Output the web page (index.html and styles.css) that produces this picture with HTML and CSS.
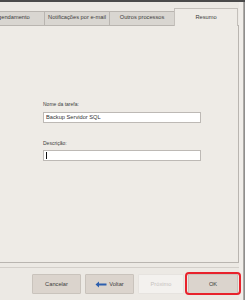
FILE: index.html
```html
<!DOCTYPE html>
<html lang="pt">
<head>
    <meta charset="UTF-8">
    <title>Assistente de tarefa</title>
    <link rel="stylesheet" href="styles.css">
</head>
<body>
    <div class="titlebar"></div>
    <div class="window">
        <div class="main">
            <nav class="tabs">
                <div class="tab">Agendamento</div>
                <div class="tab">Notificações por e-mail</div>
                <div class="tab">Outros processos</div>
                <div class="tab active">Resumo</div>
            </nav>

            <section class="panel">
                <div class="form">
                    <label class="field-label">Nome da tarefa:</label>
                    <div class="input">Backup Servidor SQL</div>

                    <label class="field-label second">Descrição:</label>
                    <div class="input"><span class="caret"></span></div>
                </div>
            </section>

            <footer class="footer">
                <button class="btn cancel">Cancelar</button>
                <button class="btn back">
                    <svg class="arrow" width="12" height="7" viewBox="0 0 12 7">
                        <path d="M0.5 3.5 L4 0.5 L4 2.6 L11.5 2.6 L11.5 4.4 L4 4.4 L4 6.5 Z" fill="#2d5fae"/>
                    </svg>
                    Voltar
                </button>
                <button class="btn next" disabled>Próximo</button>
                <button class="btn ok">OK</button>
            </footer>
        </div>
        <div class="edge"></div>
    </div>
</body>
</html>
```

FILE: styles.css
```css
:root {
    --window-bg: #ece9e4;
    --panel-bg: #eeebe6;
    --tab-bg: #d9d6d1;
    --border: #b9b5b0;
    --text: #3c3c3c;
    --button-bg: #dbd4cd;
    --highlight: #e8222c;
}

* {
    box-sizing: border-box;
    margin: 0;
    padding: 0;
}

body {
    width: 245px;
    height: 300px;
    overflow: hidden;
    background: var(--window-bg);
    color: var(--text);
    font-family: "Liberation Sans", Arial, sans-serif;
    font-size: 5.7px;
}

.titlebar {
    height: 2px;
    background: #4a4a4a;
}

.window {
    display: flex;
    height: 298px;
}

.main {
    flex: 1;
    display: flex;
    flex-direction: column;
    min-width: 0;
}

.edge {
    width: 6px;
    background: linear-gradient(to right, #f0ede9 0 4px, #aeaba7 4px 5px, #8f8e8d 5px);
}

/* tabs */
.tabs {
    display: flex;
    align-items: flex-end;
    height: 17px;
    margin-top: 6px;
    margin-left: -21px;
    position: relative;
    z-index: 1;
}

.tab {
    width: 66px;
    height: 14px;
    margin-right: -1px;
    padding-bottom: 3px;
    border: 1px solid var(--border);
    border-bottom: none;
    background: var(--tab-bg);
    display: flex;
    align-items: center;
    justify-content: center;
    white-space: nowrap;
}

.tab.active {
    width: 64px;
    height: 18px;
    margin-bottom: -1px;
    padding-bottom: 2px;
    background: var(--panel-bg);
    border-color: #c4c0bb;
}

/* panel */
.panel {
    height: 238px;
    margin-left: -2px;
    border: 1px solid var(--border);
    background: var(--panel-bg);
}

.form {
    width: 158px;
    margin-left: 44px;
    padding-top: 75px;
    display: flex;
    flex-direction: column;
}

.field-label {
    font-size: 5px;
    line-height: 7px;
    margin-bottom: 4px;
}

.field-label.second {
    margin-top: 17px;
    margin-bottom: 3px;
}

.input {
    height: 11px;
    border: 1px solid #bdb9b5;
    background: #fff;
    padding-left: 2px;
    line-height: 9px;
    color: #333;
}

.caret {
    display: inline-block;
    width: 1px;
    height: 7px;
    margin-top: 1px;
    background: #111;
    vertical-align: top;
}

/* footer */
.footer {
    margin-top: 4px;
    border-top: 1px solid #d3cfca;
    padding: 6px 1px 0 0;
    display: flex;
    justify-content: flex-end;
    gap: 4px;
}

.btn {
    height: 20px;
    border: 1px solid #c9c3bc;
    border-radius: 1px;
    background: var(--button-bg);
    color: var(--text);
    font-family: inherit;
    font-size: 5.7px;
    display: flex;
    align-items: center;
    justify-content: center;
    gap: 2px;
}

.cancel { width: 49px; }
.back { width: 49px; }

.next {
    width: 46px;
    background: #f3f1ee;
    border-color: #e6e3df;
    color: #c6c2be;
}

.ok {
    width: 50px;
    position: relative;
}

.ok::after {
    content: "";
    position: absolute;
    top: -3px;
    left: -4px;
    right: -4px;
    bottom: -2px;
    border: 2px solid var(--highlight);
    border-radius: 4px;
}
```
